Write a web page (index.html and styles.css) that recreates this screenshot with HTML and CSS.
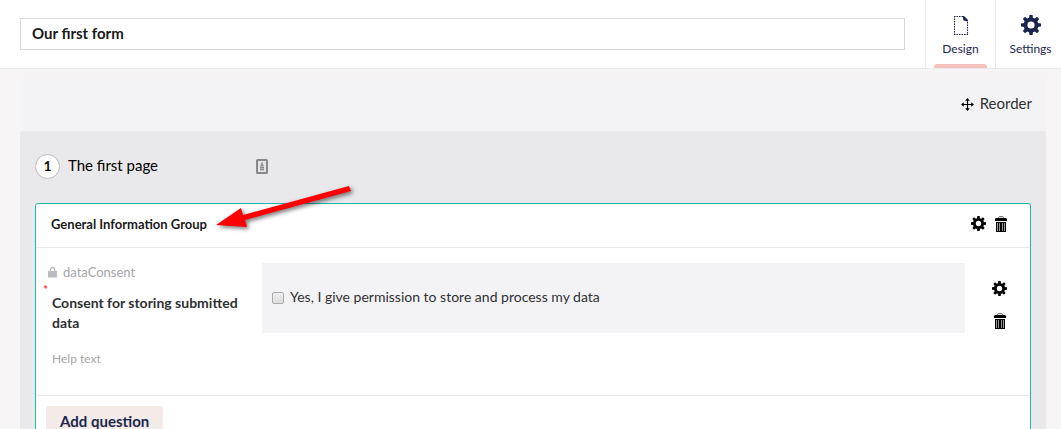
FILE: index.html
```html
<!DOCTYPE html>
<html lang="en">
<head>
<meta charset="utf-8">
<title>Our first form</title>
<link rel="stylesheet" href="styles.css">
</head>
<body>
<svg class="sprite" aria-hidden="true">
  <symbol id="gear" viewBox="-10 -10 20 20">
    <circle r="5.5" fill="none" stroke="currentColor" stroke-width="3.8"/>
    <g fill="currentColor">
      <path id="pair" d="M-2-6.5-1.6-10H1.6L2-6.500ZM-2 6.500-1.600 10H1.600L2 6.500Z"/>
      <use href="#pair" transform="rotate(45)"/>
      <use href="#pair" transform="rotate(90)"/>
      <use href="#pair" transform="rotate(135)"/>
    </g>
  </symbol>
  <symbol id="trash" viewBox="0 0 12 16">
    <path d="M3.500 2V1.500Q3.500.7 4.500.7H7.500Q8.500.7 8.500 1.500V2" fill="none" stroke="#555" stroke-width="1"/>
    <path d="M1 2H11L12 3V5H0V3Z" fill="currentColor"/>
    <path d="M1 6H11V16H1Z" fill="currentColor"/>
    <path d="M2.500 7V15M4.500 7V15M7.500 7V15M9.500 7V15" stroke="#999" stroke-width="1"/>
  </symbol>
</svg>

<header class="topbar">
  <input class="form-name" type="text" value="Our first form" aria-label="Form name">
  <nav class="tabs">
    <button class="tab active" type="button">
      <svg class="tab-icon" viewBox="0 0 20 20" aria-hidden="true">
        <path d="M3.500 1V19.500M3 19.500H17M16.500 18.500V5.500M3 1.500H12" fill="none" stroke="currentColor" stroke-width="1.100" stroke-dasharray="1.500 1"/>
        <path d="M11.500 1H13L17 5V6.500L12.500 5.500Z" fill="currentColor"/>
      </svg>
      <span>Design</span>
    </button>
    <button class="tab" type="button">
      <svg class="tab-icon" aria-hidden="true"><use href="#gear"/></svg>
      <span>Settings</span>
    </button>
  </nav>
</header>

<main class="editor">
  <div class="toolbar">
    <button class="reorder" type="button">
      <svg class="move-icon" viewBox="0 0 14 14" aria-hidden="true">
        <path d="M7 2V12M2 7H12" stroke="currentColor" stroke-width="1.300"/>
        <path d="M7 0 9.500 3H4.500ZM7 14 9.500 11H4.500ZM0 7 3 4.500V9.500ZM14 7 11 4.500V9.500Z" fill="currentColor"/>
      </svg>
      <span>Reorder</span>
    </button>
  </div>

  <section class="page">
    <div class="page-head">
      <span class="page-number">1</span>
      <h1 class="page-title">The first page</h1>
      <svg class="note-icon" viewBox="0 0 12 15" aria-hidden="true">
        <rect x="1" y="1" width="10" height="13" rx=".5" fill="#e4e4e6" stroke="#888" stroke-width="2"/>
        <path d="M6 3.500V7M4.500 6.500H7.500M4 8.500H8M4 10.500H8" stroke="#888" stroke-width="1.500"/>
      </svg>
    </div>

    <div class="group">
      <div class="group-head">
        <h2 class="group-title">General Information Group</h2>
        <div class="group-actions">
          <button class="icon-button" type="button" aria-label="Group settings"><svg class="gear" aria-hidden="true"><use href="#gear"/></svg></button>
          <button class="icon-button" type="button" aria-label="Delete group"><svg class="trash" aria-hidden="true"><use href="#trash"/></svg></button>
        </div>
        <svg class="pointer" viewBox="0 0 144 50" aria-hidden="true">
          <path d="M2 41 27 24 29 31 135 2 137 7 31 36 33 43Z" fill="#f00"/>
        </svg>
      </div>

      <div class="question">
        <div class="question-text">
          <div class="alias">
            <svg class="lock" viewBox="0 0 10 12" aria-hidden="true">
              <path d="M2.500 5.500V3.500A2.500 2.500 0 0 1 7.500 3.500V5.500" fill="none" stroke="currentColor" stroke-width="1.500"/>
              <rect y="5" width="10" height="7" rx=".5" fill="currentColor"/>
            </svg>
            <span>dataConsent</span>
          </div>
          <div class="caption"><span class="required">*</span>Consent for storing submitted data</div>
          <div class="help">Help text</div>
        </div>
        <div class="preview">
          <label class="consent"><input class="tick" type="checkbox"><span>Yes, I give permission to store and process my data</span></label>
        </div>
        <div class="question-actions">
          <button class="icon-button" type="button" aria-label="Question settings"><svg class="gear" aria-hidden="true"><use href="#gear"/></svg></button>
          <button class="icon-button" type="button" aria-label="Delete question"><svg class="trash" aria-hidden="true"><use href="#trash"/></svg></button>
        </div>
      </div>

      <div class="group-foot">
        <button class="add" type="button">Add question</button>
      </div>
    </div>
  </section>
</main>
</body>
</html>
```
FILE: styles.css
```css
* { box-sizing: border-box; }

body {
  margin: 0;
  height: 100vh;
  overflow: hidden;
  background: #f6f4f5;
  color: #303033;
  font: 15px/20px Lato, "Liberation Sans", sans-serif;
}

button {
  margin: 0;
  padding: 0;
  border: 0;
  background: none;
  color: inherit;
  font: inherit;
}

svg { display: block; flex: none; }

.sprite { position: absolute; width: 0; height: 0; }

.topbar {
  display: flex;
  align-items: center;
  gap: 20px;
  padding-left: 20px;
  background: #fff;
  border-bottom: 1px solid #e9e9eb;
}

.form-name {
  flex: 1;
  min-width: 0;
  height: 32px;
  padding: 0 11px 2px;
  border: 1px solid #d8d7d9;
  background: #fff;
  color: #1a1a1a;
  font: bold 15px/20px Lato, "Liberation Sans", sans-serif;
}

.tabs { display: flex; margin-right: -4px; }

.tab {
  display: flex;
  flex-direction: column;
  align-items: center;
  gap: 4px;
  width: 70px;
  height: 68px;
  padding-top: 15px;
  border-left: 1px solid #e9e9eb;
  color: #1b264f;
  font-size: 12px;
  line-height: 20px;
}

.tab-icon { width: 20px; height: 20px; }

.active::after {
  content: "";
  width: 53px;
  height: 4px;
  margin-top: auto;
  border-radius: 3px 3px 0 0;
  background: #f5c1bc;
}

.active span { margin-bottom: -4px; }

.editor { margin: 10px 15px 0 20px; }

.toolbar {
  display: flex;
  justify-content: flex-end;
  padding: 14px 14px 18px;
  background: #f3f3f5;
}

.reorder { display: flex; align-items: center; gap: 6px; }

.move-icon { width: 13px; height: 13px; margin-top: 3px; color: #000; }

.page {
  padding: 22px 15px 20px;
  border-radius: 3px 3px 0 0;
  background: #e9e9eb;
}

.page-head { display: flex; align-items: center; height: 26px; margin-bottom: 24px; }

.page-number {
  width: 25px;
  height: 25px;
  border: 1px solid #bbbabf;
  border-radius: 50%;
  background: #fff;
  color: #111;
  font-size: 14px;
  font-weight: bold;
  line-height: 22px;
  text-align: center;
}

.page-title {
  width: 188px;
  margin: 0 0 0 8px;
  padding-bottom: 2px;
  color: #000;
  font-size: 15px;
  font-weight: normal;
}

.note-icon { width: 12px; height: 15px; }

.group { border: 1px solid #1fb5ac; border-radius: 3px; background: #fff; }

.group-head {
  position: relative;
  display: flex;
  justify-content: space-between;
  align-items: center;
  height: 44px;
  padding: 0 23px 4px 15px;
  border-bottom: 1px solid #e9e9eb;
}

.group-title { margin: 0; color: #1a1a1a; font-size: 13px; font-weight: bold; }

.group-actions { display: flex; gap: 9px; color: #000; }

.gear { width: 15px; height: 15px; }

.trash { width: 12px; height: 16px; }

.pointer {
  position: absolute;
  top: -20px;
  left: 178px;
  width: 144px;
  height: 50px;
  filter: drop-shadow(2px 2px 2px #0008);
}

.question {
  display: flex;
  padding: 15px 23px 26px 12px;
  border-bottom: 1px solid #e9e9eb;
}

.question-text { width: 214px; }

.alias {
  display: flex;
  align-items: center;
  gap: 6px;
  color: #a5a5a8;
  font-size: 13px;
  line-height: 18px;
}

.lock { width: 9px; height: 12px; color: #bbbabf; }

.caption {
  position: relative;
  margin-top: 12px;
  padding: 0 20px 0 4px;
  font-size: 14px;
  font-weight: bold;
}

.required {
  position: absolute;
  top: -9px;
  left: -5px;
  color: #fe3e39;
  font-size: 12px;
  line-height: 12px;
}

.help { margin-top: 16px; padding-left: 4px; color: #a5a5a8; font-size: 12px; }

.preview {
  flex: 1;
  display: flex;
  align-items: center;
  height: 70px;
  padding: 0 10px 2px;
  background: #f3f3f5;
}

.consent { display: flex; align-items: center; gap: 6px; font-size: 14px; }

.tick {
  appearance: none;
  width: 12px;
  height: 12px;
  margin: 2px 0 0;
  border: 1px solid #aaa;
  border-radius: 2px;
  background: linear-gradient(#eee, #ddd);
}

.question-actions {
  display: flex;
  flex-direction: column;
  align-items: center;
  gap: 17px;
  margin-left: 27px;
  padding-top: 18px;
  color: #000;
}

.group-foot { padding: 10px; }

.add {
  height: 32px;
  padding: 0 14px 2px;
  border-radius: 3px;
  background: #f3ebe8;
  color: #1b264f;
  font-weight: bold;
}
```
